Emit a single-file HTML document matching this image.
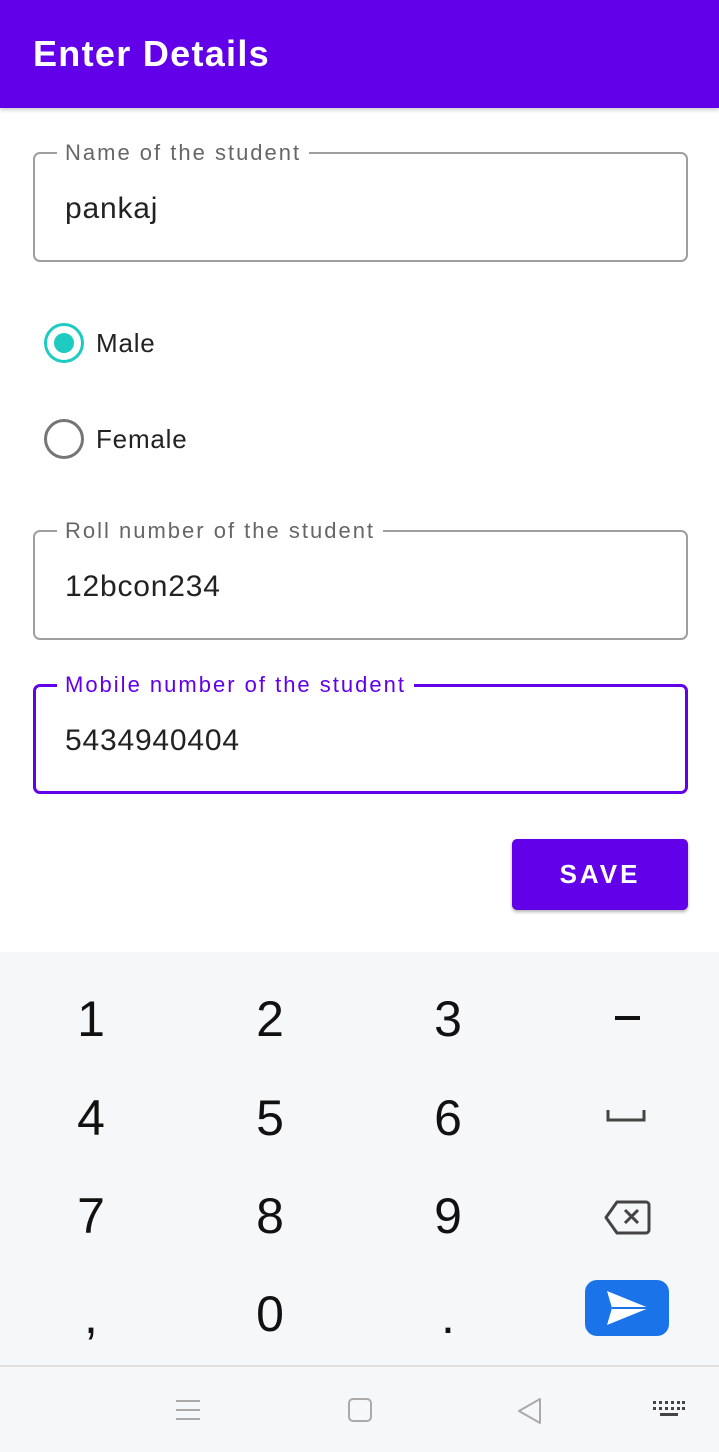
<!DOCTYPE html>
<html><head><meta charset="utf-8"><style>
*{margin:0;padding:0;box-sizing:border-box}
body{width:719px;height:1452px;background:#fff;font-family:"Liberation Sans",Roboto,sans-serif;position:relative;overflow:hidden}
.bar{position:absolute;left:0;top:0;width:719px;height:108px;background:#6200ea;box-shadow:0 2px 4px rgba(0,0,0,.2)}
.bar span{position:absolute;left:33px;top:33px;color:#fff;font-size:36px;font-weight:bold;letter-spacing:1.3px}
.f{position:absolute;left:33px;width:655px;height:110px;border:2px solid #9e9e9e;border-radius:7px}
.f .l{position:absolute;left:22px;top:-14px;background:#fff;padding:0 8px;font-size:22px;color:#666;letter-spacing:2px}
.f .v{position:absolute;left:30px;top:38px;font-size:30px;color:#222;letter-spacing:.8px}
.f.a{border:3px solid #6200ea}
.f.a .l{color:#6200ea;left:21px;top:-15px}
.f.a .v{left:29px;top:37px}
.r{position:absolute;left:44px;width:40px;height:40px;border-radius:50%;border:3px solid #757575}
.r.on{border-color:#1ecbc0}
.r.on:after{content:"";position:absolute;left:7px;top:7px;width:20px;height:20px;border-radius:50%;background:#1ecbc0}
.rl{position:absolute;left:96px;font-size:26px;color:#222;letter-spacing:.8px}
.btn{position:absolute;left:512px;top:839px;width:176px;height:71px;background:#6200ea;border-radius:5px;color:#fff;font-size:26px;font-weight:bold;letter-spacing:3px;text-align:center;line-height:71px;box-shadow:0 2px 3px rgba(0,0,0,.3)}
.kb{position:absolute;left:0;top:952px;width:719px;height:500px;background:#f6f7f9}
.k{position:absolute;font-size:50px;color:#111;width:100px;text-align:center}
.nav{position:absolute;left:0;top:1365px;width:719px;height:87px;border-top:2px solid #e0e0e0}
</style></head><body>
<div class="bar"><span>Enter Details</span></div>
<div class="f" style="top:152px"><div class="l">Name of the student</div><div class="v">pankaj</div></div>
<div class="r on" style="top:323px"></div><div class="rl" style="top:328px">Male</div>
<div class="r" style="top:419px"></div><div class="rl" style="top:424px">Female</div>
<div class="f" style="top:530px"><div class="l">Roll number of the student</div><div class="v">12bcon234</div></div>
<div class="f a" style="top:684px"><div class="l">Mobile number of the student</div><div class="v">5434940404</div></div>
<div class="btn">SAVE</div>
<div class="kb">
<div class="k" style="left:41px;top:38px">1</div><div class="k" style="left:220px;top:38px">2</div><div class="k" style="left:398px;top:38px">3</div>
<div class="k" style="left:41px;top:137px">4</div><div class="k" style="left:220px;top:137px">5</div><div class="k" style="left:398px;top:137px">6</div>
<div class="k" style="left:41px;top:235px">7</div><div class="k" style="left:220px;top:235px">8</div><div class="k" style="left:398px;top:235px">9</div>
<div class="k" style="left:41px;top:335px">,</div><div class="k" style="left:220px;top:333px">0</div><div class="k" style="left:398px;top:335px">.</div>
<div style="position:absolute;left:615px;top:64px;width:25px;height:4px;background:#111"></div>
<svg style="position:absolute;left:606px;top:156px" width="42" height="16"><path d="M2 2v10h36V2" fill="none" stroke="#444" stroke-width="3"/></svg>
<svg style="position:absolute;left:603px;top:247px" width="48" height="40"><path d="M14 3h29a3 3 0 0 1 3 3v25a3 3 0 0 1-3 3H14L3 18.5z" fill="none" stroke="#444" stroke-width="3" stroke-linejoin="round"/><path d="M22 11l13 13M35 11L22 24" stroke="#444" stroke-width="3"/></svg>
<div style="position:absolute;left:585px;top:328px;width:84px;height:56px;background:#1a73e8;border-radius:12px"><svg width="84" height="56"><path d="M22 11l42 17-42 17 5-17z" fill="#fff"/><path d="M27 28h37" stroke="#1a73e8" stroke-width="2"/></svg></div>
</div>
<div class="nav">
<svg style="position:absolute;left:175px;top:32px" width="26" height="22"><path d="M1 2h24M1 11h24M1 20h24" stroke="#aaa" stroke-width="2"/></svg>
<div style="position:absolute;left:348px;top:31px;width:24px;height:24px;border:2px solid #aaa;border-radius:5px"></div>
<svg style="position:absolute;left:516px;top:30px" width="28" height="28"><path d="M24 2v24L3 14z" fill="none" stroke="#aaa" stroke-width="2" stroke-linejoin="round"/></svg>
<svg style="position:absolute;left:652px;top:32px" width="34" height="22"><g fill="#444"><rect x="1" y="2" width="3" height="3"/><rect x="7" y="2" width="3" height="3"/><rect x="13" y="2" width="3" height="3"/><rect x="19" y="2" width="3" height="3"/><rect x="25" y="2" width="3" height="3"/><rect x="30" y="2" width="3" height="3"/><rect x="1" y="8" width="3" height="3"/><rect x="7" y="8" width="3" height="3"/><rect x="13" y="8" width="3" height="3"/><rect x="19" y="8" width="3" height="3"/><rect x="25" y="8" width="3" height="3"/><rect x="30" y="8" width="3" height="3"/><rect x="8" y="14" width="18" height="3"/></g></svg>
</div>
</body></html>
